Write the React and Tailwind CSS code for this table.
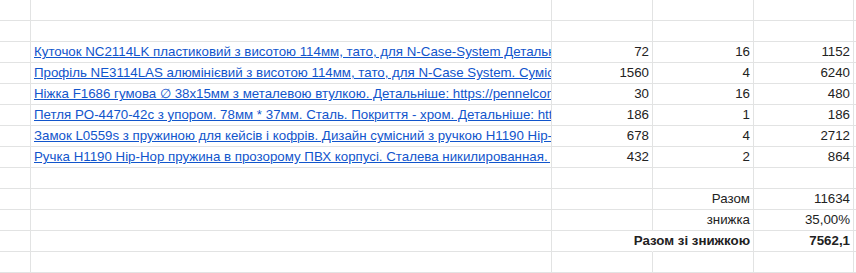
const ITEMS = [
  { name: 'Куточок NC2114LK пластиковий з висотою 114мм, тато, для N-Case-System Детальніше: https://pennelcomonline.com', price: '72', qty: '16', sum: '1152' },
  { name: 'Профіль NE3114LAS алюмінієвий з висотою 114мм, тато, для N-Case System. Сумісний з кутами', price: '1560', qty: '4', sum: '6240' },
  { name: 'Ніжка F1686 гумова ∅ 38x15мм з металевою втулкою. Детальніше: https://pennelcomonline.com', price: '30', qty: '16', sum: '480' },
  { name: 'Петля PO-4470-42c з упором. 78мм * 37мм. Сталь. Покриття - хром. Детальніше: https://pennelcomonline.com', price: '186', qty: '1', sum: '186' },
  { name: 'Замок L0559s з пружиною для кейсів і кофрів. Дизайн сумісний з ручкою H1190 Hip-Hop', price: '678', qty: '4', sum: '2712' },
  { name: 'Ручка H1190 Hip-Hop пружина в прозорому ПВХ корпусі. Сталева никилированная. Детальніше', price: '432', qty: '2', sum: '864' },
];

const base = 'border-b border-[#e2e3e3] h-[21px] whitespace-nowrap leading-[20px] px-[3px]';
const cell = `${base} border-r overflow-hidden`;

function Row({ b = null, c = '', d = '', e = '', first = false, bold = false }) {
  const h = first ? 'h-[19px]' : '';
  const w = bold ? 'font-bold' : '';
  return (
    <>
      <div className={`${cell} ${h}`} />
      <div className={`${cell} ${h}`}>{b}</div>
      {bold ? (
        <div className={`${base} ${h} border-r border-r-white`}>{c}</div>
      ) : (
        <div className={`${cell} ${h} text-right`}>{c}</div>
      )}
      {bold ? (
        <div className={`${base} ${h} border-r flex justify-end ${w}`}>
          <span>{d}</span>
        </div>
      ) : (
        <div className={`${cell} ${h} text-right`}>{d}</div>
      )}
      <div className={`${cell} ${h} text-right ${w}`}>{e}</div>
      <div className={`${cell} ${h}`} />
    </>
  );
}

export default function App() {
  return (
    <div
      className="w-[856px] h-[273px] overflow-hidden bg-white text-[13.3px] text-[#222]"
      style={{ fontFamily: '"Liberation Sans", Arial, sans-serif' }}
    >
      <div className="grid grid-cols-[31px_521px_101px_101px_100px_1fr]">
        <Row first />
        <Row />
        {ITEMS.map((it) => (
          <Row
            key={it.sum}
            b={<span className="text-[#1155cc] underline">{it.name}</span>}
            c={it.price}
            d={it.qty}
            e={it.sum}
          />
        ))}
        <Row />
        <Row d="Разом" e="11634" />
        <Row d="знижка" e="35,00%" />
        <Row d="Разом зі знижкою" e="7562,1" bold />
        <Row />
        <Row />
      </div>
    </div>
  );
}
